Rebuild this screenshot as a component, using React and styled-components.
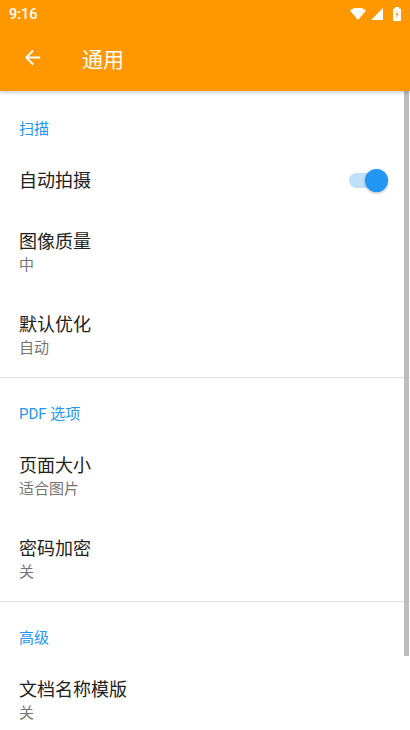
import React, { useState } from "react";
import styled, { createGlobalStyle } from "styled-components";

const GlobalStyle = createGlobalStyle`
  html, body {
    margin: 0;
    padding: 0;
    background: #fff;
  }
  body {
    font-family: Roboto, "Noto Sans CJK SC", "Noto Sans", sans-serif;
  }
`;

const Screen = styled.div`
  position: relative;
  width: 410px;
  height: 730px;
  overflow: hidden;
  background: #fff;
`;

const AppBar = styled.div`
  background-color: #ff9800;
  color: #fff;
  box-shadow: 0 2px 3px rgba(0, 0, 0, 0.18);
  position: relative;
  z-index: 2;
`;

const StatusBar = styled.div`
  height: 24px;
  display: flex;
  align-items: center;
  justify-content: space-between;
  padding: 4px 8px 0 9px;
  box-sizing: border-box;
  font-size: 14.5px;
  font-weight: 500;
`;

const StatusIcons = styled.div`
  display: flex;
  align-items: center;
  gap: 5px;
`;

const Toolbar = styled.div`
  height: 67px;
  display: flex;
  align-items: center;
`;

const BackButton = styled.button`
  width: 64px;
  height: 56px;
  border: none;
  background: transparent;
  display: flex;
  align-items: center;
  justify-content: center;
  padding: 0;
  cursor: pointer;
`;

const Title = styled.h1`
  margin: 0 0 0 18px;
  font-size: 21px;
  font-weight: 400;
`;

const List = styled.div`
  display: flex;
  flex-direction: column;
`;

const Section = styled.div`
  border-bottom: ${(p) => (p.$last ? "none" : "1.5px solid #e0e0e0")};
`;

const SectionHeader = styled.div`
  height: ${(p) => p.$height || 57}px;
  display: flex;
  align-items: flex-end;
  padding: 0 19px 12px;
  box-sizing: border-box;
  color: #2196f3;
  font-size: 15px;
`;

const Item = styled.div`
  height: ${(p) => p.$height || 83}px;
  display: flex;
  align-items: center;
  padding: 0 19px;
  box-sizing: border-box;
`;

const ItemText = styled.div`
  flex: 1;
  display: flex;
  flex-direction: column;
  gap: 2px;
`;

const ItemTitle = styled.div`
  font-size: 18px;
  color: #212121;
  line-height: 22px;
`;

const ItemSummary = styled.div`
  font-size: 15px;
  color: #757575;
  line-height: 20px;
`;

const Track = styled.div`
  position: relative;
  width: 34px;
  height: 15px;
  border-radius: 8px;
  background: ${(p) => (p.$on ? "#bfe0fb" : "#c4c4c4")};
  margin-right: 8px;
  cursor: pointer;
`;

const Thumb = styled.div`
  position: absolute;
  top: -4px;
  left: ${(p) => (p.$on ? "16px" : "-2px")};
  width: 23px;
  height: 23px;
  border-radius: 50%;
  background: ${(p) => (p.$on ? "#2196f3" : "#f5f5f5")};
  box-shadow: 0 1px 3px rgba(0, 0, 0, 0.3);
`;

const ScrollIndicator = styled.div`
  position: absolute;
  right: 1px;
  top: 91px;
  width: 5px;
  height: 565px;
  background: #bdbdbd;
`;

const Switch = ({ on, onToggle }) => (
  <Track $on={on} onClick={onToggle}>
    <Thumb $on={on} />
  </Track>
);

const sections = [
  {
    title: "扫描",
    headerHeight: 59,
    items: [
      { title: "自动拍摄", toggle: true, height: 61 },
      { title: "图像质量", summary: "中" },
      { title: "默认优化", summary: "自动" },
    ],
  },
  {
    title: "PDF 选项",
    items: [
      { title: "页面大小", summary: "适合图片" },
      { title: "密码加密", summary: "关" },
    ],
  },
  {
    title: "高级",
    last: true,
    items: [{ title: "文档名称模版", summary: "关" }],
  },
];

const App = () => {
  const [autoCapture, setAutoCapture] = useState(true);

  return (
    <Screen>
      <GlobalStyle />
      <AppBar>
        <StatusBar>
          <span>9:16</span>
          <StatusIcons>
            <svg width="16" height="12" viewBox="0 0 16 12">
              <path d="M8 12 L0 2.6 A12 12 0 0 1 16 2.6 Z" fill="#fff" />
            </svg>
            <svg width="12" height="12" viewBox="0 0 12 12">
              <path d="M12 0 L12 12 L0 12 Z" fill="#fff" />
            </svg>
            <svg width="10" height="14" viewBox="0 0 10 14" style={{ marginLeft: 4 }}>
              <rect x="3" y="0" width="4" height="2" fill="#fff" />
              <rect x="1" y="1.5" width="8" height="12.5" rx="1" fill="#fff" />
              <path d="M5.8 3.5 L3.4 8 L5 8 L4.2 11.5 L6.6 7 L5 7 Z" fill="#ff9800" />
            </svg>
          </StatusIcons>
        </StatusBar>
        <Toolbar>
          <BackButton aria-label="返回">
            <svg width="23" height="23" viewBox="0 0 24 24">
              <path
                d="M20 11H7.83l5.59-5.59L12 4l-8 8 8 8 1.41-1.41L7.83 13H20v-2z"
                fill="#fff"
              />
            </svg>
          </BackButton>
          <Title>通用</Title>
        </Toolbar>
      </AppBar>

      <List>
        {sections.map((section) => (
          <Section key={section.title} $last={section.last}>
            <SectionHeader $height={section.headerHeight}>{section.title}</SectionHeader>
            {section.items.map((item) => (
              <Item key={item.title} $height={item.height}>
                <ItemText>
                  <ItemTitle>{item.title}</ItemTitle>
                  {item.summary && <ItemSummary>{item.summary}</ItemSummary>}
                </ItemText>
                {item.toggle && (
                  <Switch on={autoCapture} onToggle={() => setAutoCapture(!autoCapture)} />
                )}
              </Item>
            ))}
          </Section>
        ))}
      </List>

      <ScrollIndicator />
    </Screen>
  );
};

export default App;
